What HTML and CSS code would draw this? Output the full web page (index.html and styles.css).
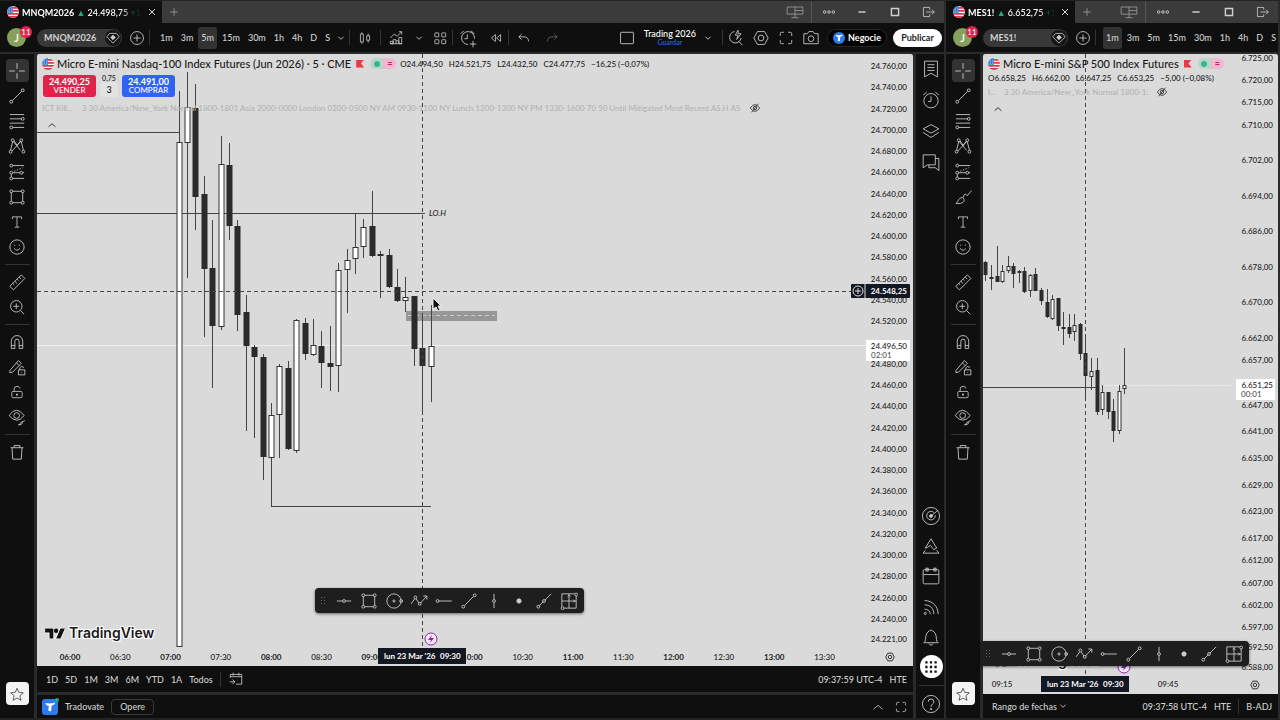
FILE: index.html
```html
<!DOCTYPE html>
<html lang="es">
<head>
    <meta charset="UTF-8">
    <meta name="viewport" content="width=device-width, initial-scale=1.0">
    <title>MNQM2026 24.498,75</title>
    <link rel="stylesheet" href="styles.css">
</head>
<body>
    <!-- icon sprite -->
    <svg class="sprite" aria-hidden="true">
        <symbol id="flag" viewBox="0 0 18 18"><clipPath id="round"><circle cx="9" cy="9" r="9"/></clipPath><g clip-path="url(#round)"><path fill="#f4f4f4" d="M0 0h18v18H0z"/><path fill="#e0394b" d="M9 1.500h9v2.500H9zM9 6h9v2.500H9zM0 10.500h18V13H0zM1 15h16v3H1z"/><path fill="#2f7dd1" d="M0 0h9v10H0z"/><path stroke="#cfe3f7" stroke-dasharray="1 1.500" d="M1 3h8M1 5.500h8M1 8h8"/></g></symbol>
        <symbol id="close" viewBox="0 0 28 28"><path d="m7 7 14 14M21 7 7 21"/></symbol>
        <symbol id="plus" viewBox="0 0 28 28"><path d="M14 5v18M5 14h18"/></symbol>
        <symbol id="pluscircle" viewBox="0 0 28 28"><circle cx="14" cy="14" r="9"/><path d="M14 9v10M9 14h10"/></symbol>
        <symbol id="down" viewBox="0 0 28 28"><path d="m8 11 6 6 6-6"/></symbol>
        <symbol id="up" viewBox="0 0 28 28"><path d="m6 18 8-7 8 7"/></symbol>
        <symbol id="monitors" viewBox="0 0 28 28"><path d="M3 7h22v10H3zM14 7v15M9 22h10M14 12h11"/></symbol>
        <symbol id="dots" viewBox="0 0 28 28"><circle cx="4" cy="14" r="3"/><circle cx="14" cy="14" r="3"/><circle cx="24" cy="14" r="3"/></symbol>
        <symbol id="min" viewBox="0 0 28 28"><path stroke-width="2" d="M9 14h10"/></symbol>
        <symbol id="max" viewBox="0 0 28 28"><path stroke-width="2" d="M9 9h10v10H9z"/></symbol>
        <symbol id="exit" viewBox="0 0 28 28"><path d="M17 10V6H6v16h11v-4M11 14h14M21 10l4 4-4 4"/></symbol>
        <symbol id="gem" viewBox="0 0 28 28"><path d="M8 6h12l5 6-11 11L3 12z"/><path fill="currentColor" d="m14 9 4 4-4 4-4-4z"/></symbol>
        <symbol id="candles" viewBox="0 0 28 28"><path d="M6 7h5v14H6zM8.500 4v3M8.500 21v3M17 10h5v8h-5zM19.500 6v4M19.500 18v4"/></symbol>
        <symbol id="indicators" viewBox="0 0 28 28"><path d="m4 14 7-7 5 4 8-8M19 3h5v5M4 24v-4h5v4zM9 24v-7h5v7M14 19h5v5M19 24V13h5v11zM4 24h20"/></symbol>
        <symbol id="grid4" viewBox="0 0 28 28"><rect x="5" y="5" width="7" height="7" rx="1"/><rect x="17" y="5" width="7" height="7" rx="1"/><rect x="5" y="17" width="7" height="7" rx="1"/><rect x="17" y="17" width="7" height="7" rx="1"/></symbol>
        <symbol id="alarmplus" viewBox="0 0 28 28"><path d="M14 23a9 9 0 1 1 9-8M13 9v6h-4M4 8l4-4M18 4l5 4M21 18v9M16.500 22.500h9"/></symbol>
        <symbol id="rewind" viewBox="0 0 28 28"><path d="M13 8v12l-7-6zM22 8v12l-7-6z"/></symbol>
        <symbol id="undo" viewBox="0 0 28 28"><path d="m10 7-5 5 5 5M5 12h9c5 0 8 3 8 8"/></symbol>
        <symbol id="redo" viewBox="0 0 28 28"><path d="m18 7 5 5-5 5M23 12h-9c-5 0-8 3-8 8"/></symbol>
        <symbol id="square" viewBox="0 0 28 28"><rect x="5" y="6" width="18" height="16" rx="1"/></symbol>
        <symbol id="quick" viewBox="0 0 28 28"><path d="M12 5a8 8 0 1 0 9 9M18 19l5 5M17 3l-4 7h4l-2 6 6-8h-4z"/></symbol>
        <symbol id="hex" viewBox="0 0 28 28"><path d="M9 5h10l5 9-5 9H9l-5-9z"/><circle cx="14" cy="14" r="4"/></symbol>
        <symbol id="full" viewBox="0 0 28 28"><path d="M6 11V8q0-2 2-2h3M17 6h3q2 0 2 2v3M22 17v3q0 2-2 2h-3M11 22H8q-2 0-2-2v-3"/></symbol>
        <symbol id="camera" viewBox="0 0 28 28"><path d="M4 8h5l2-3h6l2 3h5v14H4z"/><circle cx="14" cy="15" r="4"/></symbol>
        <symbol id="t" viewBox="0 0 28 28"><path fill="#fff" stroke="none" d="M6 7q8 2 17-1-1 5-6 5l-1 10q-3 1-5-1l1-8q-5 0-6-5z"/></symbol>
        <symbol id="cross" viewBox="0 0 28 28"><path d="M14 3v8M14 17v8M3 14h8M17 14h8"/></symbol>
        <symbol id="line" viewBox="0 0 28 28"><circle cx="6" cy="22" r="2"/><circle cx="22" cy="6" r="2"/><path d="M7.500 20.500l13-13"/></symbol>
        <symbol id="fib" viewBox="0 0 28 28"><path d="M4 5h20M4 11h16M4 17h20M8 23h16"/><circle cx="22" cy="11" r="2"/><circle cx="6" cy="23" r="2"/></symbol>
        <symbol id="pattern" viewBox="0 0 28 28"><path d="m5 20 3-12M9 8l10 12M20 8l3 12M19 8 7 21M10 7l4 6 5-6"/><circle cx="5" cy="22" r="2"/><circle cx="8" cy="6" r="2"/><circle cx="20" cy="6" r="2"/><circle cx="23" cy="22" r="2"/></symbol>
        <symbol id="forecast" viewBox="0 0 28 28"><path d="M8 5h16M8 15h10M22 15h2M8 23h16M6 17v4"/><path stroke-dasharray="2 2" d="m10 13 12-5"/><circle cx="6" cy="5" r="2"/><circle cx="6" cy="15" r="2"/><circle cx="6" cy="23" r="2"/><circle cx="20" cy="15" r="2"/></symbol>
        <symbol id="rect" viewBox="0 0 28 28"><path d="M8 6h12M8 22h12M6 8v12M22 8v12"/><circle cx="6" cy="6" r="2"/><circle cx="22" cy="6" r="2"/><circle cx="6" cy="22" r="2"/><circle cx="22" cy="22" r="2"/></symbol>
        <symbol id="brush" viewBox="0 0 28 28"><path d="M4 23c4-1 2-8 9-8 3 1 4 5 0 7-3 2-6 1-9 1zM14 15c1-5 4-6 5-4 1 3 3-2 7-6"/></symbol>
        <symbol id="text" viewBox="0 0 28 28"><path d="M6 9V5h16v4M14 5v18M10 23h8"/></symbol>
        <symbol id="smile" viewBox="0 0 28 28"><circle cx="14" cy="14" r="10"/><path d="M10 16q4 5 8 0M10 11.500h1.500M16.500 11.500H18"/></symbol>
        <symbol id="ruler" viewBox="0 0 28 28"><path d="M4 20 20 4l5 5L9 25zM8 16l2 2M11 13l3 3M14 10l2 2M17 7l3 3"/></symbol>
        <symbol id="zoom" viewBox="0 0 28 28"><circle cx="13" cy="13" r="8"/><path d="M13 9v8M9 13h8M19 19l5 5"/></symbol>
        <symbol id="magnet" viewBox="0 0 28 28"><path d="M6 23V13a8 8 0 0 1 16 0v10h-5V13a3 3 0 0 0-6 0v10zM6 19h5M17 19h5"/></symbol>
        <symbol id="penlock" viewBox="0 0 28 28"><path d="M4 19 16 5l4 4L8 21l-4 1zM13 8l4 4M16 18h9v7h-9zM18 18v-3q2-3 5-1v1M20.500 21v1"/></symbol>
        <symbol id="lock" viewBox="0 0 28 28"><rect x="5" y="13" width="18" height="11" rx="2"/><path d="M9 13V9q0-5 5-5 4 0 5 4"/><path stroke-width="3" d="M14 17v3"/></symbol>
        <symbol id="eye" viewBox="0 0 28 28"><path d="M3 12q10-15 21 0-10 13-21 0zM16 25c3 0 2-4 5-4 2 2-1 4-5 4zM21 21l4-2"/><circle cx="13.500" cy="12" r="4"/></symbol>
        <symbol id="trash" viewBox="0 0 28 28"><path d="M5 8h18M10 8V5h8v3M7 8l1 16h12l1-16"/></symbol>
        <symbol id="star" viewBox="0 0 28 28"><path d="m14 4 3 7 8 1-6 5 2 8-7-4-7 4 2-8-6-5 8-1z"/></symbol>
        <symbol id="list" viewBox="0 0 28 28"><path d="M5 3h18v22l-9-5-9 5zM9 8h10M9 12h10M9 16h10"/></symbol>
        <symbol id="alarm" viewBox="0 0 28 28"><circle cx="14" cy="15" r="10"/><path d="M14 9v7h-4M3 7l5-4M20 3l5 4"/></symbol>
        <symbol id="layers" viewBox="0 0 28 28"><path d="m14 5 11 6-11 6-11-6zM3 16l11 7 11-7"/></symbol>
        <symbol id="chat" viewBox="0 0 28 28"><path d="M3 4h17v14H9l-6 4zM20 9h5v17l-5-4h-9v-4"/></symbol>
        <symbol id="radar" viewBox="0 0 28 28"><circle cx="14" cy="14" r="12"/><path d="M18 9a6 6 0 1 0 2 4M14 14 24 6"/><circle cx="14" cy="14" r="2" fill="currentColor"/></symbol>
        <symbol id="pyramid" viewBox="0 0 28 28"><path d="m6 17 8-13 8 13-4 2-5-6-4 3zM6 20l-3 4h22l-3-4"/></symbol>
        <symbol id="calendar" viewBox="0 0 28 28"><rect x="3" y="5" width="22" height="20" rx="2"/><path d="M3 12h22"/><rect x="7" y="3" width="3" height="4"/><rect x="18" y="3" width="3" height="4"/></symbol>
        <symbol id="feed" viewBox="0 0 28 28"><path d="M5 5c11 0 19 8 19 19M5 11c8 0 13 5 13 13M5 17c5 0 8 3 8 7"/><circle cx="6" cy="23" r="1.500"/></symbol>
        <symbol id="bell" viewBox="0 0 28 28"><path d="M4 22c3-2 2-6 3-10 1-5 4-6 7-8 3 2 6 3 7 8 1 4 0 8 3 10zM11 23q3 5 6 0"/></symbol>
        <symbol id="apps" viewBox="0 0 28 28"><path stroke-width="4" stroke-dasharray="4 4" d="M4 6h20M4 14h20M4 22h20"/></symbol>
        <symbol id="help" viewBox="0 0 28 28"><circle cx="14" cy="14" r="12"/><path d="M10 11q0-4 4-4t4 4c0 3-4 3-4 7"/><circle cx="14" cy="21" r="1"/></symbol>
        <symbol id="goto" viewBox="0 0 28 28"><path d="M4 12V6h20v17H14M4 10h20M9 3v5M19 3v5M3 19h9M8 15l4 4-4 4"/></symbol>
        <symbol id="hline" viewBox="0 0 28 28"><path d="M4 14h8M16 14h8"/><circle cx="14" cy="14" r="2"/></symbol>
        <symbol id="circle" viewBox="0 0 28 28"><circle cx="14" cy="14" r="10"/><circle cx="14" cy="14" r="1.500"/><circle cx="24" cy="14" r="2"/></symbol>
        <symbol id="path" viewBox="0 0 28 28"><path d="m3 18 5-7M10 11l4 6M16 17l9-10M20 7h5v5"/><circle cx="9" cy="9" r="2"/><circle cx="15" cy="18" r="2"/></symbol>
        <symbol id="ray" viewBox="0 0 28 28"><path d="M7 14h18"/><circle cx="5" cy="14" r="2"/></symbol>
        <symbol id="vline" viewBox="0 0 28 28"><path d="M14 4v8M14 16v8"/><circle cx="14" cy="14" r="2"/></symbol>
        <symbol id="dot" viewBox="0 0 28 28"><circle cx="14" cy="14" r="3" fill="currentColor"/></symbol>
        <symbol id="extended" viewBox="0 0 28 28"><path d="m7 21 6-6M15 13l9-9"/><circle cx="6" cy="22" r="2"/><circle cx="14" cy="14" r="2"/></symbol>
        <symbol id="range" viewBox="0 0 28 28"><path d="M4 4h18M24 7v17H7M4 4v18M4 14h20M14 4v20M12 8l2-2 2 2M20 12l2 2-2 2"/><circle cx="5" cy="24" r="2"/><circle cx="24" cy="5" r="2"/></symbol>
        <symbol id="hidden" viewBox="0 0 28 28"><path d="M3 14q11-16 22 0-11 16-22 0zM22 4 6 24"/><circle cx="14" cy="14" r="4"/></symbol>
        <symbol id="tv" viewBox="0 0 36 20"><path fill="#111" stroke="#fff" stroke-width="3" paint-order="stroke" d="M0 1h15v18H8V8H0zM28 1h8l-8 18h-8z"/><circle cx="20" cy="5" r="4" fill="#111"/></symbol>
    </svg>

    <section class="window">
        <header class="tabs">
            <div class="tab">
                <svg class="flag"><use href="#flag"/></svg>
                <span class="tab-text"><b>MNQM2026</b> <i class="rise">▲</i> 24.498,75 <span class="rise">+1.65</span></span>
                <button aria-label="Cerrar"><svg class="small"><use href="#close"/></svg></button>
            </div>
            <button class="new-tab" aria-label="Nueva pestaña"><svg class="small"><use href="#plus"/></svg></button>
            <div class="controls">
                <button class="layouts" aria-label="Monitores"><svg><use href="#monitors"/></svg></button>
                <button aria-label="Más"><svg class="small"><use href="#dots"/></svg></button>
                <button aria-label="Minimizar"><svg><use href="#min"/></svg></button>
                <button aria-label="Maximizar"><svg><use href="#max"/></svg></button>
                <button aria-label="Salir"><svg class="mid"><use href="#exit"/></svg></button>
            </div>
        </header>
        <nav class="toolbar">
            <button class="avatar">J<span class="badge">11</span></button>
            <button class="symbol">MNQM2026 <span><svg class="mid"><use href="#gem"/></svg></span></button>
            <button class="tool" aria-label="Comparar"><svg><use href="#pluscircle"/></svg></button>
            <hr>
            <div class="intervals">
                <button>1m</button><button>3m</button><button class="on">5m</button><button>15m</button><button>30m</button><button>1h</button><button>4h</button><button>D</button><button>S</button>
            </div>
            <button class="tool narrow" aria-label="Intervalos"><svg class="small"><use href="#down"/></svg></button>
            <hr>
            <button class="tool wide" aria-label="Velas"><svg class="mid"><use href="#candles"/></svg></button>
            <hr>
            <button class="tool wide" aria-label="Indicadores"><svg class="mid"><use href="#indicators"/></svg></button>
            <button class="tool narrow" aria-label="Favoritos"><svg class="small"><use href="#down"/></svg></button>
            <button class="tool" aria-label="Plantillas"><svg class="mid"><use href="#grid4"/></svg></button>
            <hr>
            <button class="tool wide" aria-label="Alerta"><svg><use href="#alarmplus"/></svg></button>
            <button class="tool" aria-label="Repetición"><svg class="mid"><use href="#rewind"/></svg></button>
            <hr>
            <button class="tool wide" aria-label="Deshacer"><svg class="mid"><use href="#undo"/></svg></button>
            <button class="tool dim" aria-label="Rehacer"><svg class="mid"><use href="#redo"/></svg></button>
            <div class="right-tools">
                <button class="tool wide" aria-label="Diseño"><svg><use href="#square"/></svg></button>
                <button class="layout-name">Trading 2026<span>Guardar</span></button>
                <button class="tool narrow" aria-label="Diseños"><svg class="small"><use href="#down"/></svg></button>
                <hr>
                <button class="tool" aria-label="Búsqueda rápida"><svg><use href="#quick"/></svg></button>
                <button class="tool" aria-label="Ajustes"><svg><use href="#hex"/></svg></button>
                <button class="tool" aria-label="Pantalla completa"><svg><use href="#full"/></svg></button>
                <button class="tool" aria-label="Foto"><svg><use href="#camera"/></svg></button>
                <button class="trade"><span class="logo"><svg><use href="#t"/></svg></span>Negocie</button>
                <button class="publish">Publicar</button>
            </div>
        </nav>
        <div class="work">
            <aside class="rail">
                <div class="group eight">
                    <button class="on" aria-label="Cursor"><svg><use href="#cross"/></svg></button>
                    <button aria-label="Línea"><svg><use href="#line"/></svg></button>
                    <button aria-label="Fibonacci"><svg><use href="#fib"/></svg></button>
                    <button aria-label="Patrones"><svg><use href="#pattern"/></svg></button>
                    <button aria-label="Previsión"><svg><use href="#forecast"/></svg></button>
                    <button aria-label="Rectángulo"><svg><use href="#rect"/></svg></button>
                    <button aria-label="Texto"><svg class="mid"><use href="#text"/></svg></button>
                    <button aria-label="Iconos"><svg><use href="#smile"/></svg></button>
                </div>
                <hr>
                <div class="group two">
                    <button aria-label="Regla"><svg><use href="#ruler"/></svg></button>
                    <button aria-label="Zoom"><svg><use href="#zoom"/></svg></button>
                </div>
                <hr>
                <div class="group four">
                    <button aria-label="Imán"><svg><use href="#magnet"/></svg></button>
                    <button aria-label="Modo dibujo"><svg><use href="#penlock"/></svg></button>
                    <button aria-label="Bloquear"><svg class="mid"><use href="#lock"/></svg></button>
                    <button aria-label="Ocultar"><svg><use href="#eye"/></svg></button>
                </div>
                <hr>
                <div class="group one"><button aria-label="Eliminar"><svg><use href="#trash"/></svg></button></div>
                <button class="favs" aria-label="Favoritos"><svg><use href="#star"/></svg></button>
            </aside>
            <main class="center">
                <div class="chart">
                    <svg class="plot" id="plotNq"></svg>
                    <svg class="axis" id="axisNq"></svg>
                    <svg class="times" id="timesNq"></svg>
                    <button class="axis-gear" aria-label="Ajustes del eje"><svg class="small"><use href="#hex"/></svg></button>
                    <div class="legend">
                        <div class="title"><svg class="flag"><use href="#flag"/></svg><h1>Micro E-mini Nasdaq-100 Index Futures (Jun 2026) · 5 · CME</h1><span class="ribbon"></span><span class="status"><i></i><b>=</b></span>
                            <p class="ohlc"><span>O24.494,50</span><span>H24.521,75</span><span>L24.432,50</span><span>C24.477,75</span><span>−16,25 (−0,07%)</span></p></div>
                        <div class="orders">
                            <button class="sell"><b>24.490,25</b>VENDER</button>
                            <div class="spread">0,75<span>3</span></div>
                            <button class="buy"><b>24.491,00</b>COMPRAR</button>
                        </div>
                        <p class="study"><span>ICT Kill...</span><span>3 30 America/New_York Normal 1800-1801 Asia 2000-0000 London 0200-0500 NY AM 0930-1100 NY Lunch 1200-1300 NY PM 1330-1600 70 50 Until Mitigated Most Recent AS.H AS</span><svg class="small"><use href="#hidden"/></svg></p>
                        <button class="fold" aria-label="Plegar"><svg class="small"><use href="#up"/></svg></button>
                    </div>
                    <div class="brand"><svg><use href="#tv"/></svg>TradingView</div>
                    <div class="palette">
                        <span class="grip"></span>
                        <button aria-label="Línea horizontal"><svg><use href="#hline"/></svg></button>
                        <button aria-label="Rectángulo"><svg><use href="#rect"/></svg></button>
                        <button aria-label="Círculo"><svg><use href="#circle"/></svg></button>
                        <button aria-label="Ruta"><svg><use href="#path"/></svg></button>
                        <button aria-label="Rayo horizontal"><svg><use href="#ray"/></svg></button>
                        <button aria-label="Línea"><svg><use href="#line"/></svg></button>
                        <button aria-label="Línea vertical"><svg><use href="#vline"/></svg></button>
                        <button aria-label="Punto"><svg><use href="#dot"/></svg></button>
                        <button aria-label="Rayo"><svg><use href="#extended"/></svg></button>
                        <button aria-label="Rango"><svg><use href="#range"/></svg></button>
                    </div>
                </div>
                <div class="ranges">
                    <button>1D</button><button>5D</button><button>1M</button><button>3M</button><button>6M</button><button>YTD</button><button>1A</button><button>Todos</button>
                    <hr>
                    <button aria-label="Ir a"><svg class="mid"><use href="#goto"/></svg></button>
                    <span class="clock">09:37:59 UTC-4</span><button>HTE</button>
                </div>
                <footer class="broker">
                    <span class="broker-logo"><svg><use href="#t"/></svg></span>
                    <span>Tradovate</span>
                    <button class="operate">Opere</button>
                    <button class="end" aria-label="Abrir panel"><svg class="mid"><use href="#up"/></svg></button>
                    <button aria-label="Maximizar panel"><svg class="mid"><use href="#full"/></svg></button>
                </footer>
            </main>
            <aside class="widgets">
                <div class="group top">
                    <button aria-label="Lista"><svg><use href="#list"/></svg></button>
                    <button aria-label="Alertas"><svg><use href="#alarm"/></svg></button>
                    <button aria-label="Objetos"><svg><use href="#layers"/></svg></button>
                    <button aria-label="Chat"><svg><use href="#chat"/></svg></button>
                </div>
                <div class="group bottom">
                    <button aria-label="Filtros"><svg><use href="#radar"/></svg></button>
                    <button aria-label="Pine"><svg><use href="#pyramid"/></svg></button>
                    <button aria-label="Calendario"><svg><use href="#calendar"/></svg></button>
                    <button aria-label="Noticias"><svg><use href="#feed"/></svg></button>
                    <button aria-label="Notificaciones"><svg><use href="#bell"/></svg></button>
                    <button class="apps" aria-label="Productos"><svg class="mid"><use href="#apps"/></svg></button>
                </div>
                <hr>
                <div class="group"><button aria-label="Ayuda"><svg><use href="#help"/></svg></button></div>
            </aside>
        </div>
    </section>

    <section class="window second">
        <header class="tabs">
            <div class="tab">
                <svg class="flag"><use href="#flag"/></svg>
                <span class="tab-text"><b>MES1!</b> <i class="rise">▲</i> 6.652,75 <span class="rise">+1.</span></span>
                <button aria-label="Cerrar"><svg class="small"><use href="#close"/></svg></button>
            </div>
            <button class="new-tab" aria-label="Nueva pestaña"><svg class="small"><use href="#plus"/></svg></button>
            <div class="controls">
                <button class="layouts" aria-label="Monitores"><svg><use href="#monitors"/></svg></button>
                <button aria-label="Más"><svg class="small"><use href="#dots"/></svg></button>
                <button aria-label="Minimizar"><svg><use href="#min"/></svg></button>
                <button aria-label="Maximizar"><svg><use href="#max"/></svg></button>
                <button aria-label="Salir"><svg class="mid"><use href="#exit"/></svg></button>
            </div>
        </header>
        <nav class="toolbar">
            <button class="avatar">J<span class="badge">11</span></button>
            <button class="symbol">MES1! <span><svg class="mid"><use href="#gem"/></svg></span></button>
            <button class="tool" aria-label="Comparar"><svg><use href="#pluscircle"/></svg></button>
            <hr>
            <div class="intervals">
                <button class="on">1m</button><button>3m</button><button>5m</button><button>15m</button><button>30m</button><button>1h</button><button>4h</button><button>D</button><button>S</button>
            </div>
        </nav>
        <div class="work">
            <aside class="rail">
                <div class="group eight">
                    <button class="on" aria-label="Cursor"><svg><use href="#cross"/></svg></button>
                    <button aria-label="Línea"><svg><use href="#line"/></svg></button>
                    <button aria-label="Fibonacci"><svg><use href="#fib"/></svg></button>
                    <button aria-label="Patrones"><svg><use href="#pattern"/></svg></button>
                    <button aria-label="Previsión"><svg><use href="#forecast"/></svg></button>
                    <button aria-label="Pincel"><svg><use href="#brush"/></svg></button>
                    <button aria-label="Texto"><svg class="mid"><use href="#text"/></svg></button>
                    <button aria-label="Iconos"><svg><use href="#smile"/></svg></button>
                </div>
                <hr>
                <div class="group two">
                    <button aria-label="Regla"><svg><use href="#ruler"/></svg></button>
                    <button aria-label="Zoom"><svg><use href="#zoom"/></svg></button>
                </div>
                <hr>
                <div class="group four">
                    <button aria-label="Imán"><svg><use href="#magnet"/></svg></button>
                    <button aria-label="Modo dibujo"><svg><use href="#penlock"/></svg></button>
                    <button aria-label="Bloquear"><svg class="mid"><use href="#lock"/></svg></button>
                    <button aria-label="Ocultar"><svg><use href="#eye"/></svg></button>
                </div>
                <hr>
                <div class="group one"><button aria-label="Eliminar"><svg><use href="#trash"/></svg></button></div>
                <button class="favs" aria-label="Favoritos"><svg><use href="#star"/></svg></button>
            </aside>
            <main class="center">
                <div class="chart">
                    <svg class="plot" id="plotEs"></svg>
                    <svg class="axis" id="axisEs"></svg>
                    <svg class="times" id="timesEs"></svg>
                    <button class="axis-gear" aria-label="Ajustes del eje"><svg class="small"><use href="#hex"/></svg></button>
                    <div class="legend">
                        <div class="title"><svg class="flag"><use href="#flag"/></svg><h1>Micro E-mini S&amp;P 500 Index Futures</h1><span class="ribbon"></span><span class="status"><i></i><b>=</b></span></div>
                        <p class="ohlc"><span>O6.658,25</span><span>H6.662,00</span><span>L6.647,25</span><span>C6.653,25</span><span>−5,00 (−0,08%)</span></p>
                        <p class="study"><span>I...</span><span>3 30 America/New_York Normal 1800-1:</span><svg class="small"><use href="#hidden"/></svg></p>
                        <button class="fold" aria-label="Plegar"><svg class="small"><use href="#up"/></svg></button>
                    </div>
                    <div class="brand"><svg><use href="#tv"/></svg>TradingView</div>
                    <div class="palette">
                        <span class="grip"></span>
                        <button aria-label="Línea horizontal"><svg><use href="#hline"/></svg></button>
                        <button aria-label="Rectángulo"><svg><use href="#rect"/></svg></button>
                        <button aria-label="Círculo"><svg><use href="#circle"/></svg></button>
                        <button aria-label="Ruta"><svg><use href="#path"/></svg></button>
                        <button aria-label="Rayo horizontal"><svg><use href="#ray"/></svg></button>
                        <button aria-label="Línea"><svg><use href="#line"/></svg></button>
                        <button aria-label="Línea vertical"><svg><use href="#vline"/></svg></button>
                        <button aria-label="Punto"><svg><use href="#dot"/></svg></button>
                        <button aria-label="Rayo"><svg><use href="#extended"/></svg></button>
                        <button aria-label="Rango"><svg><use href="#range"/></svg></button>
                    </div>
                </div>
                <div class="ranges">
                    <button>Rango de fechas <svg class="small"><use href="#down"/></svg></button>
                    <span class="clock">09:37:58 UTC-4</span><button>HTE</button>
                    <hr>
                    <button>B-ADJ</button>
                </div>
            </main>
        </div>
    </section>

    <script>
        // velas: [máximo, techo, suelo, mínimo, alcista]
        const nq = [
            [37, 88, 593, 593, 1], [18, 53, 89, 224, 1], [30, 54, 143, 176, 0], [122, 140, 215, 283, 0],
            [166, 214, 272, 334, 0], [82, 110, 273, 276, 1], [89, 111, 172, 186, 0], [166, 172, 261, 277, 0],
            [241, 258, 292, 377, 0], [291, 293, 303, 384, 0], [300, 303, 403, 426, 0], [349, 361, 404, 453, 1],
            [310, 312, 361, 404, 1], [307, 314, 395, 396, 0], [265, 266, 397, 399, 1], [264, 269, 300, 306, 0],
            [265, 291, 301, 302, 1], [277, 292, 309, 334, 0], [272, 309, 313, 337, 0], [209, 216, 312, 338, 1],
            [195, 206, 216, 259, 1], [160, 193, 205, 220, 1], [165, 173, 193, 204, 1], [137, 172, 202, 203, 0],
            [197, 200, 202, 244, 0], [195, 201, 233, 234, 0], [215, 233, 247, 248, 0], [223, 243, 247, 258, 1],
            [242, 242, 295, 312, 0], [263, 294, 312, 361, 0], [251, 292, 313, 348, 1]
        ];
        const es = [
            [207, 208, 221, 227, 0], [211, 223, 225, 236, 0], [192, 222, 228, 228, 0], [211, 217, 228, 229, 1],
            [202, 212, 217, 219, 1], [209, 212, 220, 234, 0], [216, 217, 219, 229, 1], [213, 217, 238, 239, 0],
            [220, 221, 237, 243, 1], [214, 220, 237, 237, 0], [234, 236, 247, 251, 0], [235, 248, 263, 264, 0],
            [241, 245, 265, 266, 1], [244, 244, 272, 277, 0], [258, 273, 274, 291, 0], [260, 273, 280, 284, 0],
            [260, 271, 278, 287, 1], [269, 270, 300, 306, 0], [283, 299, 322, 347, 0], [304, 317, 323, 336, 1],
            [304, 316, 358, 361, 0], [331, 338, 356, 361, 1], [338, 338, 358, 365, 0], [345, 357, 377, 388, 0],
            [331, 337, 377, 380, 1], [294, 331, 335, 340, 1]
        ];

        function line(x1, y1, x2, y2, cls) {
            return `<line x1="${x1}" y1="${y1}" x2="${x2}" y2="${y2}" class="${cls}"/>`;
        }
        function text(x, y, str, cls) {
            return `<text x="${x}" y="${y}" class="${cls}">${str}</text>`;
        }
        function candles(data, start, step, width) {
            return data.map(([high, top, bottom, low, up], i) => {
                const x = Math.round(start + i * step);
                return line(x + 0.5, high, x + 0.5, top, 'wick') + line(x + 0.5, bottom, x + 0.5, low, 'wick') +
                    `<rect x="${x - (width - 1) / 2 + 0.5}" y="${top + 0.5}" width="${width - 1}" height="${Math.max(bottom - top - 1, 1)}" class="${up ? 'bull' : 'bear'}"/>`;
            }).join('');
        }
        function price(n) {
            return n.toLocaleString('de-DE', { minimumFractionDigits: 2 });
        }
        function bolt(x, y) {
            return `<g transform="translate(${x} ${y})" class="bolt"><circle r="6"/><path d="M1-4-3 1h3l-1 3 4-5H0z"/></g>`;
        }
        function dateTag(x, w) {
            return `<rect x="${x}" y="1" width="${w}" height="16" class="tag"/>` + text(x + 6, 12, "lun 23 Mar '26", 'tag-text') + text(x + w - 26, 12, '09:30', 'tag-text');
        }
        const el = id => document.getElementById(id);

        // Nasdaq
        el('plotNq').innerHTML =
            line(0, 78.5, 143, 78.5, 'level') + line(0, 159.5, 388, 159.5, 'level') + line(234, 452.5, 394, 452.5, 'level') +
            line(0, 291.5, '100%', 291.5, 'last') +
            '<rect x="369" y="257" width="91" height="10" class="zone"/>' + line(371, 261.5, 458, 261.5, 'zone-mid') +
            candles(nq, 141.6, 8.4, 6) +
            line(0, 237.5, '100%', 237.5, 'cross') + line(385.5, 0, 385.5, '100%', 'cross') +
            text(392, 162, 'LO.H', 'mark') + bolt(394, 585) +
            '<path class="pointer" d="M396 244v11l3-2 2 4 2-1-2-4h3z"/>';
        let labels = '';
        for (let p = 24760; p >= 24240; p -= 20) {
            labels += text(40, 15 + (24760 - p) * 1.0635, price(p), 'price');
        }
        labels += text(40, 588, '24.221,00', 'price');
        el('axisNq').innerHTML = labels +
            '<rect x="-1" y="286" width="44" height="21" class="last-box"/>' + text(40, 295, '24.496,50', 'price') + text(4, 304, '02:01', 'count') +
            '<rect x="-16" y="230" width="59" height="14" rx="1" class="tag"/><circle cx="-9" cy="237" r="5" class="add"/><path d="M-12 237h6M-9 234v6M-2 230v14" class="add"/>' + text(40, 240, '24.548,25', 'price tag-price');
        labels = '';
        for (let i = 0; i < 16; i++) {
            const hour = String(6 + Math.floor(i / 2)).padStart(2, '0');
            labels += text(33 + i * 50.3, 13, hour + (i % 2 ? ':30' : ':00'), i % 2 ? 'time' : 'time hour');
        }
        el('timesNq').innerHTML = labels + dateTag(341, 88);

        // S&P
        el('plotEs').innerHTML =
            line(0, 333.5, 113, 333.5, 'level') + line(113, 331.5, '100%', 331.5, 'last dotted') +
            candles(es, 2.4, 5.56, 4) + line(102.5, 0, 102.5, '100%', 'cross') + bolt(141, 613);
        labels = [6725, 6720, 6715, 6710, 6702, 6694, 6686, 6678, 6670, 6662, 6657, 6652, 6647, 6641, 6635, 6629, 6623, 6617, 6612, 6607, 6602, 6597, 6592.5, 6588]
            .map(p => text(41, 7 + (6725 - p) * 4.445, price(p), 'price')).join('');
        el('axisEs').innerHTML = labels +
            '<rect x="4" y="325" width="39" height="21" class="last-box"/>' + text(41, 334, '6.651,25', 'price') + text(9, 343, '00:01', 'count');
        el('timesEs').innerHTML = text(19, 12, '09:15', 'time') + text(185, 12, '09:45', 'time') + dateTag(58, 88);
    </script>
</body>
</html>
```
FILE: styles.css
```css
* {
    box-sizing: border-box;
}
body {
    margin: 0;
    height: 100vh;
    display: grid;
    grid-template-columns: minmax(0, 946fr) minmax(0, 334fr);
    background: #0f0f0f;
    color: #d0d0d0;
    font-family: "Trebuchet MS", Lato, sans-serif;
    font-size: 9px;
    font-weight: 500;
    overflow: hidden;
}
button {
    font: inherit;
    color: inherit;
    background: none;
    border: 0;
    padding: 0;
    display: flex;
    align-items: center;
    justify-content: center;
    white-space: nowrap;
    flex: none;
}
svg {
    width: 20px;
    height: 20px;
    fill: none;
    stroke: currentColor;
    stroke-width: 1.2;
    flex: none;
}
svg.mid {
    width: 16px;
    height: 16px;
    stroke-width: 1.4;
}
svg.small {
    width: 12px;
    height: 12px;
    stroke-width: 2;
}
svg.flag {
    width: 12px;
    height: 12px;
    stroke: none;
}
.sprite {
    position: absolute;
    width: 0;
    height: 0;
}
hr {
    border: 0;
    background: #333;
    margin: 0;
    flex: none;
}
h1, p {
    margin: 0;
    font-weight: 500;
    white-space: nowrap;
}
.window {
    display: flex;
    flex-direction: column;
    min-width: 0;
    border-top: 1px solid #222;
    border-bottom: 2px solid #222;
    border-right: 2px solid #2a2a2a;
}
/* tabs */
.tabs {
    display: flex;
    height: 22px;
    background: #3b3b3b;
    flex: none;
}
.tab {
    display: flex;
    align-items: center;
    gap: 3px;
    width: 162px;
    padding: 0 4px 0 7px;
    background: #0f0f0f;
    color: #fff;
}
.second .tab {
    width: 129px;
}
.tab-text {
    flex: 1;
    overflow: hidden;
    white-space: nowrap;
    mask-image: linear-gradient(to right, #000 80%, transparent);
}
.rise {
    color: #22ab78;
    font-style: normal;
}
.new-tab {
    width: 24px;
    color: #999;
}
.controls {
    display: flex;
    margin-left: auto;
}
.controls button {
    width: 33px;
}
.controls .layouts {
    border-right: 1px solid #555;
    color: #999;
}
/* toolbar */
.toolbar {
    display: flex;
    align-items: center;
    height: 29px;
    padding-left: 7px;
    overflow: hidden;
    flex: none;
}
.toolbar hr {
    width: 1px;
    height: 15px;
}
.avatar {
    position: relative;
    width: 19px;
    height: 19px;
    border-radius: 50%;
    background: #87a05b;
    color: #fff;
    font-size: 12px;
}
.badge {
    position: absolute;
    top: -2px;
    right: -6px;
    width: 12px;
    height: 12px;
    line-height: 12px;
    border-radius: 6px;
    background: #e0234b;
    font-size: 8px;
}
.symbol {
    width: 85px;
    height: 18px;
    margin: 0 2px 0 11px;
    padding: 0 1px 0 7px;
    border-radius: 9px;
    background: #383838;
    justify-content: space-between;
    font-weight: bold;
}
.symbol span {
    display: flex;
    border-radius: 50%;
    background: #161616;
}
.tool {
    width: 25px;
    height: 24px;
}
.tool.narrow {
    width: 16px;
}
.tool.wide {
    width: 30px;
}
.tool.dim {
    color: #666;
}
.intervals {
    display: flex;
    gap: 2px;
    margin-left: 7px;
}
.intervals button {
    height: 22px;
    padding: 0 3px;
    border-radius: 3px;
}
.intervals .on {
    background: #333;
}
.right-tools {
    display: flex;
    align-items: center;
    margin-left: auto;
    padding-right: 2px;
}
.right-tools hr {
    margin-left: 6px;
}
.layout-name {
    flex-direction: column;
    margin: 0 4px 0 2px;
    color: #fff;
    line-height: 10px;
}
.layout-name span {
    color: #2962ff;
    font-size: 7px;
    line-height: 7px;
}
.trade, .publish {
    height: 18px;
    border-radius: 9px;
    font-weight: bold;
}
.trade {
    width: 60px;
    margin: 0 6px 0 4px;
    gap: 3px;
    background: #000;
    border: 1px solid #262626;
    color: #fff;
}
.publish {
    width: 49px;
    background: #fff;
    color: #222;
}
.logo, .broker-logo {
    display: flex;
    align-items: center;
    justify-content: center;
    width: 12px;
    height: 12px;
    border-radius: 6px;
    background: #2e7bf0;
}
.logo svg {
    width: 12px;
    height: 12px;
}
/* work area */
.work {
    display: flex;
    flex: 1;
    min-height: 0;
    border-top: 2px solid #2a2a2a;
}
.rail {
    display: flex;
    flex-direction: column;
    width: 37px;
    padding: 4px 0 13px 0;
    border-right: 3px solid #2a2a2a;
    align-items: center;
    flex: none;
}
.rail hr, .widgets hr {
    width: 25px;
    height: 1px;
    margin: 4px 0;
}
.group {
    display: grid;
    grid-auto-rows: 1fr;
    justify-items: center;
    align-items: center;
}
.group button {
    width: 23px;
    height: 23px;
    border-radius: 4px;
}
.group .on {
    background: #333;
}
.eight {
    height: 202px;
}
.two {
    height: 51px;
}
.four {
    height: 101px;
}
.one {
    height: 25px;
}
.favs {
    width: 23px;
    height: 23px;
    margin-top: auto;
    border-radius: 4px;
    background: #f4f4f4;
    color: #222;
}
.favs svg {
    width: 16px;
    height: 16px;
}
.center {
    display: flex;
    flex-direction: column;
    flex: 1;
    min-width: 0;
}
.widgets {
    display: flex;
    flex-direction: column;
    align-items: center;
    width: 31px;
    padding-left: 2px;
    border-left: 3px solid #2a2a2a;
    flex: none;
}
.widgets .top {
    height: 123px;
}
.widgets .bottom {
    height: 181px;
    margin-top: auto;
}
.widgets hr {
    margin: 3px 0;
}
.widgets .group:last-child {
    padding: 3px 0;
}
.widgets .apps {
    border-radius: 50%;
    background: #fff;
    color: #111;
}
/* chart */
.chart {
    position: relative;
    display: grid;
    grid-template-columns: minmax(0, 1fr) 46px;
    grid-template-rows: minmax(0, 1fr) 19px;
    flex: 1;
    min-height: 0;
    background: #dadada;
    color: #1a1a1a;
    border-radius: 2px 2px 0 0;
}
.chart .plot, .chart .axis, .chart .times {
    width: 100%;
    height: 100%;
    stroke-width: 1;
}
.chart .axis {
    overflow: visible;
}
.chart text {
    stroke: none;
    fill: #1c1c1c;
    font-size: 8px;
}
.chart .price {
    text-anchor: end;
}
.chart .time {
    text-anchor: middle;
}
.chart .hour {
    font-weight: bold;
}
.chart .mark {
    font-style: italic;
}
.chart .count {
    fill: #555;
}
.chart .tag-text, .chart .tag-price {
    fill: #fff;
    font-weight: bold;
}
.wick, .level {
    stroke: #444;
}
.bull {
    fill: #fff;
    stroke: #333;
}
.bear {
    fill: #2b2b2b;
    stroke: #2b2b2b;
}
.cross {
    stroke: #444;
    stroke-dasharray: 4 3;
}
.last {
    stroke: #eee;
}
.dotted {
    stroke-dasharray: 2 1;
}
.zone {
    fill: #979797;
    stroke: none;
}
.zone-mid {
    stroke: #ccc;
    stroke-dasharray: 4 3;
}
.tag {
    fill: #131722;
    stroke: none;
}
.add {
    stroke: #ddd;
}
.last-box {
    fill: #fff;
    stroke: none;
}
.bolt circle {
    fill: #f5eaf7;
    stroke: #8e24aa;
}
.bolt path {
    fill: #8e24aa;
    stroke: none;
}
.pointer {
    fill: #111;
    stroke: #eee;
}
.axis-gear {
    position: absolute;
    right: 17px;
    bottom: 3px;
}
.legend {
    position: absolute;
    top: 2px;
    left: 5px;
    right: 50px;
}
.title {
    display: flex;
    align-items: center;
    gap: 3px;
    height: 15px;
}
.title h1 {
    font-size: 11px;
}
.ribbon {
    width: 8px;
    height: 8px;
    margin-left: 2px;
    background: #f23645;
    clip-path: polygon(0 0, 100% 0, 60% 50%, 100% 100%, 0 100%);
}
.status {
    display: flex;
    align-items: center;
    justify-content: space-around;
    width: 26px;
    height: 11px;
    margin-left: 3px;
    border-radius: 6px;
    background: linear-gradient(to right, #b9d6cc 50%, #efb8d0 50%);
}
.status i {
    width: 6px;
    height: 6px;
    border-radius: 3px;
    background: #35b78c;
}
.status b {
    color: #d81b60;
    line-height: 10px;
}
.ohlc {
    display: flex;
    gap: 6px;
    font-size: 8px;
}
.title .ohlc {
    margin-left: 1px;
}
.second .ohlc {
    height: 14px;
    line-height: 14px;
}
.orders {
    display: flex;
    gap: 4px;
    margin-top: 4px;
    padding-left: 1px;
}
.sell, .buy {
    flex-direction: column;
    width: 53px;
    height: 22px;
    border-radius: 3px;
    color: #fff;
    font-size: 8px;
    line-height: 9px;
}
.sell b, .buy b {
    font-size: 9px;
}
.sell {
    background: #e0234b;
}
.buy {
    background: #2f62f5;
}
.spread {
    width: 18px;
    text-align: center;
    font-size: 7px;
    line-height: 7px;
}
.spread span {
    display: block;
    line-height: 15px;
    border-radius: 3px;
    background: #e2e2e2;
    font-size: 9px;
}
.study {
    display: flex;
    align-items: center;
    gap: 9px;
    height: 14px;
    margin-top: 4px;
    color: #b2b2b2;
    font-size: 8px;
}
.study svg {
    color: #333;
}
.second .study {
    margin: 0;
    gap: 8px;
}
.fold {
    margin: 4px 0 0 4px;
}
.brand {
    position: absolute;
    left: 8px;
    bottom: 24px;
    display: flex;
    align-items: center;
    gap: 4px;
    font: 600 14px/18px Inter, sans-serif;
    text-shadow: 1px 1px #fff, -1px -1px #fff, 1px -1px #fff, -1px 1px #fff;
}
.brand svg {
    overflow: visible;
    height: 11px;
    stroke: none;
}
.palette {
    position: absolute;
    left: 278px;
    bottom: 53px;
    display: flex;
    width: 269px;
    height: 25px;
    border-radius: 4px;
    background: #1e1e1e;
    color: #d0d0d0;
    box-shadow: 0 1px 3px #0008;
}
.second .palette {
    left: -3px;
    bottom: 28px;
}
.palette button {
    width: 25px;
}
.grip {
    width: 5px;
    margin: 8px 6px 8px 5px;
    background: radial-gradient(#666 1px, transparent 1px) 0 0 / 3px 3px;
}
/* bottom bars */
.ranges {
    display: flex;
    align-items: center;
    gap: 7px;
    height: 26px;
    padding: 0 6px 0 9px;
    flex: none;
}
.second .ranges {
    height: 24px;
}
.ranges hr {
    width: 1px;
    height: 15px;
}
.clock {
    margin-left: auto;
    white-space: nowrap;
}
.broker {
    display: flex;
    align-items: center;
    gap: 7px;
    height: 26px;
    padding: 0 4px 0 5px;
    border-top: 3px solid #2a2a2a;
    flex: none;
}
.broker-logo {
    position: relative;
    width: 16px;
    height: 16px;
    border-radius: 3px;
}
.broker-logo::after {
    content: "";
    position: absolute;
    top: -1px;
    right: -1px;
    width: 4px;
    height: 4px;
    border-radius: 50%;
    background: #22ab78;
}
.broker-logo svg {
    width: 16px;
    height: 16px;
}
.operate {
    width: 43px;
    height: 16px;
    border: 1px solid #3a3a3a;
    border-radius: 4px;
}
.end {
    margin-left: auto;
}
```
